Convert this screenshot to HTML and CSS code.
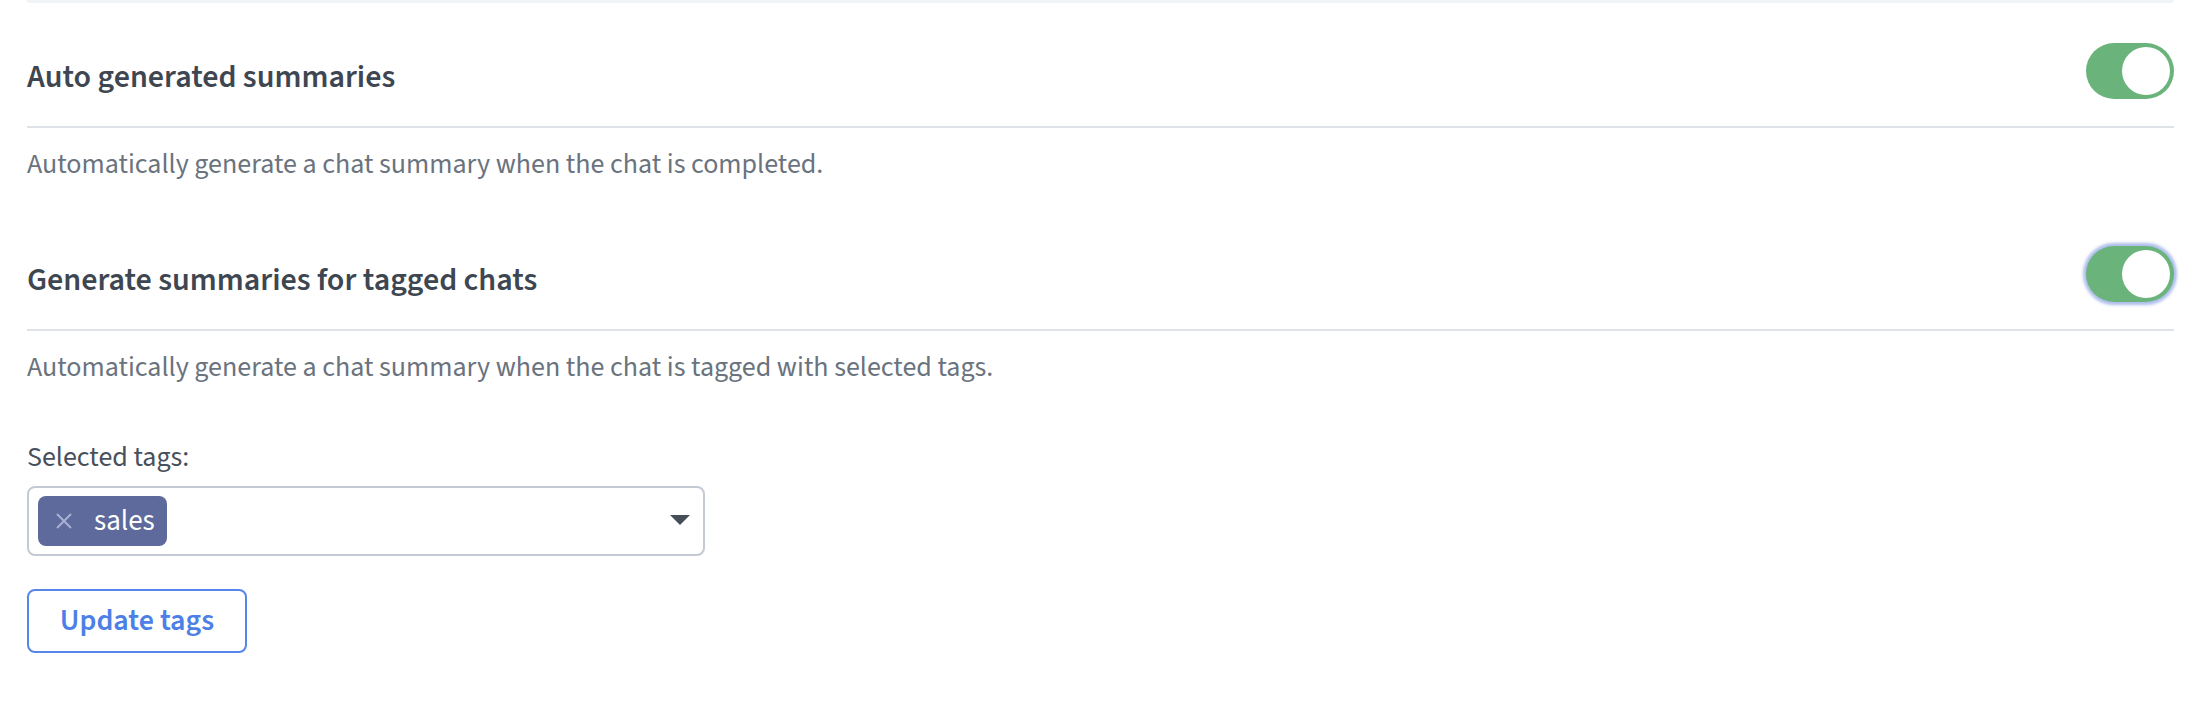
FILE: index.html
```html
<!DOCTYPE html>
<html lang="en">
<head>
<meta charset="utf-8">
<title>Chat summaries settings</title>
<link rel="stylesheet" href="styles.css">
</head>
<body>
<div class="page">
  <div class="card-edge"></div>

  <section class="setting">
    <div class="setting-head">
      <h2 class="setting-title">Auto generated summaries</h2>
      <div class="switch" role="switch" aria-checked="true"><span class="knob"></span></div>
    </div>
    <p class="setting-desc">Automatically generate a chat summary when the chat is completed.</p>
  </section>

  <section class="setting">
    <div class="setting-head">
      <h2 class="setting-title">Generate summaries for tagged chats</h2>
      <div class="switch switch-focused" role="switch" aria-checked="true"><span class="knob"></span></div>
    </div>
    <p class="setting-desc">Automatically generate a chat summary when the chat is tagged with selected tags.</p>
  </section>

  <div class="tags-field">
    <label class="field-label">Selected tags:</label>
    <div class="select">
      <div class="select-values">
        <span class="chip">
          <svg class="chip-x" width="16" height="16" viewBox="0 0 16 16"><path d="M1 1 L15 15 M15 1 L1 15" stroke="currentColor" stroke-width="2" fill="none" stroke-linecap="butt"/></svg>
          <span class="chip-text">sales</span>
        </span>
      </div>
      <svg class="select-arrow" width="20" height="10" viewBox="0 0 20 10"><polygon points="0,0 20,0 10,10" fill="currentColor"/></svg>
    </div>
    <button class="btn-outline" type="button">Update tags</button>
  </div>
</div>
</body>
</html>
```
FILE: styles.css
```css
* { box-sizing: border-box; }

body {
  margin: 0;
  background: #ffffff;
  font-family: "Source Sans 3", "Lato", "Liberation Sans", sans-serif;
  color: #3f4852;
}

.page {
  padding: 0 30px 0 27px;
}

.card-edge {
  height: 3px;
  background: #f0f3f7;
  border-radius: 0 0 6px 6px;
}

.setting {
  display: flex;
  flex-direction: column;
}

.setting-head {
  display: flex;
  justify-content: space-between;
  align-items: flex-start;
  padding: 40px 0 27px;
  border-bottom: 2px solid #dfe3e8;
}

.setting-title {
  margin: 14px 0 0;
  font-size: 32px;
  line-height: 40px;
  font-weight: 600;
  color: #3e4751;
}

.switch {
  width: 88px;
  height: 56px;
  border-radius: 28px;
  background: #6ab47c;
  padding: 4px;
  display: flex;
  justify-content: flex-end;
  flex-shrink: 0;
}

.switch-focused {
  box-shadow: 0 0 3px 3px rgba(130, 155, 225, 0.65);
}

.knob {
  width: 48px;
  height: 48px;
  border-radius: 50%;
  background: #ffffff;
}

.setting-desc {
  margin: 16px 0 22px;
  font-size: 28px;
  line-height: 40px;
  color: #6a737e;
}

.tags-field {
  display: flex;
  flex-direction: column;
  align-items: flex-start;
  padding-top: 28px;
}

.field-label {
  font-size: 28px;
  line-height: 40px;
  color: #47505a;
}

.select {
  margin-top: 9px;
  width: 678px;
  height: 70px;
  border: 2px solid #c3cad3;
  border-radius: 8px;
  display: flex;
  align-items: center;
  justify-content: space-between;
  padding: 0 13px 0 9px;
}

.select-values {
  display: flex;
  align-items: center;
  gap: 8px;
}

.chip {
  display: inline-flex;
  align-items: center;
  height: 50px;
  padding: 0 12px 0 18px;
  gap: 22px;
  background: #5d6a9b;
  border-radius: 8px;
  color: #ffffff;
}

.chip-x {
  color: #a9b0d2;
  display: block;
}

.chip-text {
  font-size: 29px;
  line-height: 40px;
  color: #ffffff;
}

.select-arrow {
  color: #454e59;
  display: block;
  margin-top: -3px;
}

.btn-outline {
  margin-top: 33px;
  width: 220px;
  height: 64px;
  border: 2px solid #5686e9;
  border-radius: 8px;
  background: #ffffff;
  color: #4c80e6;
  font-family: inherit;
  font-size: 30px;
  font-weight: 600;
  line-height: 40px;
  padding: 0;
  cursor: pointer;
}
```
